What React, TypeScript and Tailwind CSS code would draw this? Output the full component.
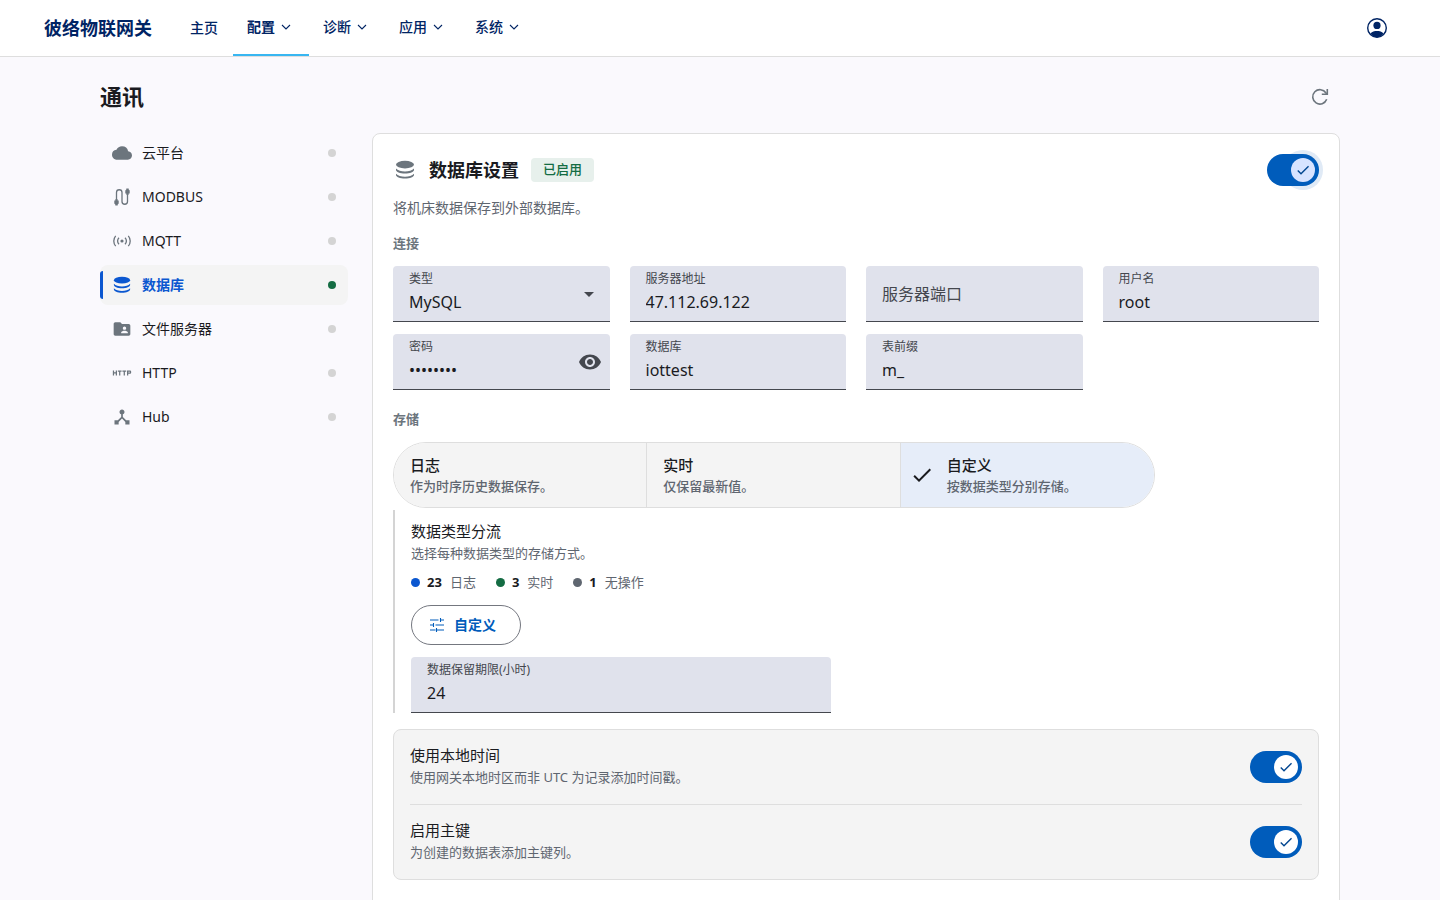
import React, { useState } from 'react';
import {
  MdCheck,
  MdCloud,
  MdDeviceHub,
  MdFolderShared,
  MdHttp,
  MdVisibility,
} from 'react-icons/md';

interface IconProps {
  className?: string;
}

const DatabaseIcon = ({ className = '' }: IconProps) => (
  <svg viewBox="0 0 20 20" fill="currentColor" className={className} aria-hidden="true">
    <ellipse cx="10" cy="4.6" rx="9" ry="3.8" />
    <path d="M1 8.6c1.8 2 5.2 3 9 3s7.2-1 9-3v1.300c0 1.800-4 3.600-9 3.600s-9-1.800-9-3.600z" />
    <path d="M1 13.700c1.800 2 5.200 3 9 3s7.200-1 9-3v1.300c0 1.800-4 3.600-9 3.600s-9-1.800-9-3.600z" />
  </svg>
);

const SignalIcon = ({ className = '' }: IconProps) => (
  <svg viewBox="0 0 20 20" fill="none" stroke="currentColor" strokeWidth="1.3" className={className} aria-hidden="true">
    <circle cx="10" cy="10" r="1.6" fill="currentColor" stroke="none" />
    <path d="M7 6.7a4.6 4.6 0 0 0 0 6.6M13 6.7a4.6 4.6 0 0 1 0 6.6" />
    <path d="M3.7 4.8a8 8 0 0 0 0 10.4M16.3 4.8a8 8 0 0 1 0 10.4" />
  </svg>
);

const CableIcon = ({ className = '' }: IconProps) => (
  <svg viewBox="0 0 20 20" fill="none" stroke="currentColor" strokeWidth="1.3" className={className} aria-hidden="true">
    <path d="M4.5 13V5.500a2.700 2.700 0 0 1 5.500 0v9a2.700 2.700 0 0 0 5.500 0V7" />
    <path d="M3.300 12.300h2.400v1.200h1v3l-1 1v.9H3.300v-.9l-1-1v-3h1zM14.300 7.700h2.400V6.500h1v-3l-1-1v-.9h-2.400v.9l-1 1v3h1z" fill="currentColor" stroke="none" />
  </svg>
);

const ChevronIcon = () => (
  <svg viewBox="0 0 10 10" fill="none" stroke="currentColor" strokeWidth="1.1" className="w-[10px] h-[10px]" aria-hidden="true">
    <path d="M1 3l4 4 4-4" />
  </svg>
);

const RefreshIcon = () => (
  <svg viewBox="0 0 20 20" fill="none" stroke="currentColor" strokeWidth="1.6" className="w-5 h-5" aria-hidden="true">
    <path d="M16.7 12.3a7.2 7.2 0 1 1-.7-6.3l1.3 1.4" />
    <path d="M17.300 2v5.300h-5.500" />
  </svg>
);

const TuneIcon = () => (
  <svg viewBox="0 0 18 18" fill="none" stroke="currentColor" strokeWidth="1.1" className="w-[18px] h-[18px]" aria-hidden="true">
    <path d="M2 4h8.5M12.5 4H16M12.5 2v4M2 9h3.5M7.5 9H16M5.5 7v4M2 14h5.5M9 14h7M8.5 12v4" />
  </svg>
);

const AccountIcon = () => (
  <svg viewBox="0 0 20 20" className="w-5 h-5" aria-hidden="true">
    <circle cx="10" cy="10" r="9.3" fill="none" stroke="currentColor" strokeWidth="1.4" />
    <circle cx="10" cy="7.4" r="3.6" fill="currentColor" />
    <path d="M3.5 15.5c1.6-1.9 4-2.5 6.5-2.5s4.9.6 6.5 2.5c-1.5 2.3-3.8 3.8-6.5 3.8s-5-1.5-6.5-3.800z" fill="currentColor" />
  </svg>
);

const menus = ['配置', '诊断', '应用', '系统'];

const channels = [
  { name: '云平台', Icon: MdCloud },
  { name: 'MODBUS', Icon: CableIcon },
  { name: 'MQTT', Icon: SignalIcon },
  { name: '数据库', Icon: DatabaseIcon, enabled: true },
  { name: '文件服务器', Icon: MdFolderShared },
  { name: 'HTTP', Icon: MdHttp },
  { name: 'Hub', Icon: MdDeviceHub },
];

const modes = [
  { id: 'log', title: '日志', desc: '作为时序历史数据保存。' },
  { id: 'live', title: '实时', desc: '仅保留最新值。' },
  { id: 'custom', title: '自定义', desc: '按数据类型分别存储。' },
];

const stats = [
  { count: 23, label: '日志', color: 'bg-[#0b57d0]' },
  { count: 3, label: '实时', color: 'bg-[#146c43]' },
  { count: 1, label: '无操作', color: 'bg-[#5f6670]' },
];

const fieldBox = 'relative h-14 rounded-t bg-[#e0e2ec] border-b border-[#44474e]';
const fieldLabel = 'absolute left-4 top-1 text-xs leading-[18px] text-[#44474e] pointer-events-none';
const fieldInput = 'w-full h-full px-4 pt-4 bg-transparent outline-none text-base text-[#1a1b1f]';

interface FieldProps {
  id: string;
  label: string;
  value: string;
  type?: string;
  children?: React.ReactNode;
}

function Field({ id, label, value, type = 'text', children }: FieldProps) {
  const [text, setText] = useState<string>(value);
  return (
    <div className={fieldBox}>
      <label
        htmlFor={id}
        className={text ? fieldLabel : 'absolute left-4 top-4 text-base text-[#44474e] pointer-events-none'}
      >
        {label}
      </label>
      <input id={id} type={type} value={text} onChange={(e) => setText(e.target.value)} className={fieldInput} />
      {children}
    </div>
  );
}

function Toggle({ id, label, focused = false }: { id: string; label: string; focused?: boolean }) {
  const [on, setOn] = useState<boolean>(true);
  return (
    <label htmlFor={id} className="relative block shrink-0 w-[52px] h-8 cursor-pointer">
      {focused && <span className="absolute -top-1 -right-1 w-10 h-10 rounded-full bg-[#e0eaf6]" />}
      <input
        id={id}
        type="checkbox"
        role="switch"
        aria-label={label}
        checked={on}
        onChange={() => setOn(!on)}
        className="peer relative block appearance-none w-[52px] h-8 rounded-full bg-[#c4c6d0] checked:bg-[#005cbb] cursor-pointer"
      />
      <span
        className={`absolute top-1 left-1 peer-checked:left-6 flex items-center justify-center w-6 h-6 rounded-full text-[#00458f] pointer-events-none ${
          focused ? 'bg-[#d7e3ff]' : 'bg-white'
        }`}
      >
        {on && <MdCheck className="w-4 h-4" />}
      </span>
    </label>
  );
}

export default function App(): React.ReactElement {
  const [mode, setMode] = useState<string>('custom');
  const [showPassword, setShowPassword] = useState<boolean>(false);

  return (
    <div className="min-h-screen bg-[#faf9fd] text-[#1a1b1f] font-['Noto_Sans','Noto_Sans_CJK_SC',sans-serif]">
      {/* Top bar */}
      <header className="flex items-center justify-between h-[57px] pl-11 pr-[53px] bg-white border-b border-[#dedede] text-[#002464]">
        <div className="flex items-center h-full">
          <a href="#home" className="text-lg font-bold">彼络物联网关</a>
          <nav className="flex h-full ml-6 text-sm font-medium">
            <a href="#main" className="flex items-center pl-[14px] pr-[15px]">主页</a>
            {menus.map((menu, i) => (
              <button
                key={menu}
                type="button"
                className={`flex items-center gap-[6px] w-[76px] pl-[14px] border-b-2 ${
                  i === 0 ? 'border-[#38b6f1] font-bold' : 'border-transparent'
                }`}
              >
                {menu}
                <ChevronIcon />
              </button>
            ))}
          </nav>
        </div>
        <button type="button" aria-label="账户">
          <AccountIcon />
        </button>
      </header>

      <div className="max-w-[1240px] mx-auto">
        <div className="flex items-center justify-between h-[76px] pt-1">
          <h1 className="pb-[2px] text-[22px] font-bold">通讯</h1>
          <button type="button" aria-label="刷新" className="p-[10px] text-[#6c757d]">
            <RefreshIcon />
          </button>
        </div>

        <div className="flex items-start gap-6">
          {/* Channel list */}
          <nav className="flex flex-col gap-1 w-62 shrink-0 text-sm">
            {channels.map(({ name, Icon, enabled }) => (
              <a
                key={name}
                href={`#${name}`}
                className={`relative flex items-center gap-[10px] h-10 px-3 rounded-lg ${
                  enabled ? 'bg-[#f4f4f4] text-[#0b57d0] font-bold' : ''
                }`}
              >
                {enabled && <span className="absolute left-0 top-[6px] bottom-[6px] w-[3px] rounded-l-sm bg-[#0b57d0]" />}
                <span className={`flex items-center justify-center w-5 ${enabled ? '' : 'text-[#6c757d]'}`}>
                  <Icon className={enabled ? 'w-[18px] h-[18px]' : 'w-5 h-5'} />
                </span>
                {name}
                <span className={`ml-auto w-2 h-2 rounded-full ${enabled ? 'bg-[#146c43]' : 'bg-[#d4d4d4]'}`} />
              </a>
            ))}
          </nav>

          {/* Database settings */}
          <main className="flex-1 min-w-0 px-5 pt-5 pb-10 bg-white border border-[#dedede] rounded-lg">
            <div className="flex items-center">
              <DatabaseIcon className="w-5 h-5 ml-[2px] mr-[14px] text-[#6c757d]" />
              <h2 className="text-lg font-bold">数据库设置</h2>
              <span className="h-6 ml-3 px-3 rounded bg-[#e7f0ec] text-[13px] leading-[22px] font-medium text-[#146c43]">已启用</span>
              <span className="ml-auto">
                <Toggle id="enabled" label="数据库设置" focused />
              </span>
            </div>
            <p className="mt-3 text-sm leading-5 text-[#5f6670]">将机床数据保存到外部数据库。</p>

            <h3 className="mt-[15px] text-[13px] leading-5 font-bold text-[#6c757d]">连接</h3>
            <div className="grid grid-cols-4 gap-x-5 gap-y-3 mt-[13px]">
              <div className={fieldBox}>
                <label htmlFor="type" className={fieldLabel}>类型</label>
                <select id="type" defaultValue="MySQL" className={`${fieldInput} appearance-none`}>
                  <option>MySQL</option>
                </select>
                <svg viewBox="0 0 10 5" className="absolute right-4 top-[26px] w-[10px] h-[5px] pointer-events-none" aria-hidden="true">
                  <path d="M0 0l5 5 5-5z" fill="#44474e" />
                </svg>
              </div>
              <Field id="host" label="服务器地址" value="47.112.69.122" />
              <Field id="port" label="服务器端口" value="" />
              <Field id="user" label="用户名" value="root" />
              <Field id="password" label="密码" value="password" type={showPassword ? 'text' : 'password'}>
                <button
                  type="button"
                  aria-label="显示密码"
                  onClick={() => setShowPassword(!showPassword)}
                  className="absolute right-2 top-4 text-[#44474e]"
                >
                  <MdVisibility className="w-6 h-6" />
                </button>
              </Field>
              <Field id="database" label="数据库" value="iottest" />
              <Field id="prefix" label="表前缀" value="m_" />
            </div>

            <h3 className="mt-[19px] text-[13px] leading-5 font-bold text-[#6c757d]">存储</h3>
            <div className="grid grid-cols-3 max-w-[762px] h-[66px] mt-[13px] border border-[#dedede] rounded-[33px] divide-x divide-[#dedede] overflow-hidden">
              {modes.map(({ id, title, desc }) => (
                <button
                  key={id}
                  type="button"
                  aria-pressed={mode === id}
                  onClick={() => setMode(id)}
                  className={`flex items-center text-left ${mode === id ? 'gap-[13px] pl-[9px] bg-[#e6edf9]' : 'pl-4 bg-[#f4f4f4]'}`}
                >
                  {mode === id && <MdCheck className="w-6 h-6" />}
                  <span>
                    <span className="block text-[15px] leading-[22px] font-medium">{title}</span>
                    <span className="block text-[13px] leading-5 font-medium text-[#5f6670]">{desc}</span>
                  </span>
                </button>
              ))}
            </div>

            <div className="mt-[2px] pt-[9px] pl-4 border-l-2 border-[#d4d4d4]">
              <p className="text-[15px] leading-6">数据类型分流</p>
              <p className="text-[13px] leading-5 text-[#5f6670]">选择每种数据类型的存储方式。</p>
              <ul className="flex gap-5 mt-[9px] text-[13px] leading-5">
                {stats.map(({ count, label, color }) => (
                  <li key={label} className="flex items-center">
                    <span className={`w-[9px] h-[9px] mr-[7px] rounded-full ${color}`} />
                    <strong className="mr-2 font-bold">{count}</strong>
                    <span className="text-[#5f6670]">{label}</span>
                  </li>
                ))}
              </ul>
              <button
                type="button"
                className="flex items-center gap-2 h-10 mt-[13px] pl-4 pr-6 border border-[#74777f] rounded-full text-sm font-bold text-[#005cbb]"
              >
                <TuneIcon />
                自定义
              </button>
              <div className="max-w-[420px] mt-3">
                <Field id="retention" label="数据保留期限(小时)" value="24" />
              </div>
            </div>

            <div className="mt-4 px-4 bg-[#f4f4f4] border border-[#dedede] rounded-lg">
              <div className="flex items-center justify-between h-[75px] border-b border-[#dedede]">
                <div className="pb-1">
                  <p className="text-[15px] leading-6">使用本地时间</p>
                  <p className="text-[13px] leading-5 text-[#5f6670]">使用网关本地时区而非 UTC 为记录添加时间戳。</p>
                </div>
                <Toggle id="local-time" label="使用本地时间" />
              </div>
              <div className="flex items-center justify-between h-[74px]">
                <div className="pb-1">
                  <p className="text-[15px] leading-6">启用主键</p>
                  <p className="text-[13px] leading-5 text-[#5f6670]">为创建的数据表添加主键列。</p>
                </div>
                <Toggle id="primary-key" label="启用主键" />
              </div>
            </div>
          </main>
        </div>
      </div>
    </div>
  );
}
